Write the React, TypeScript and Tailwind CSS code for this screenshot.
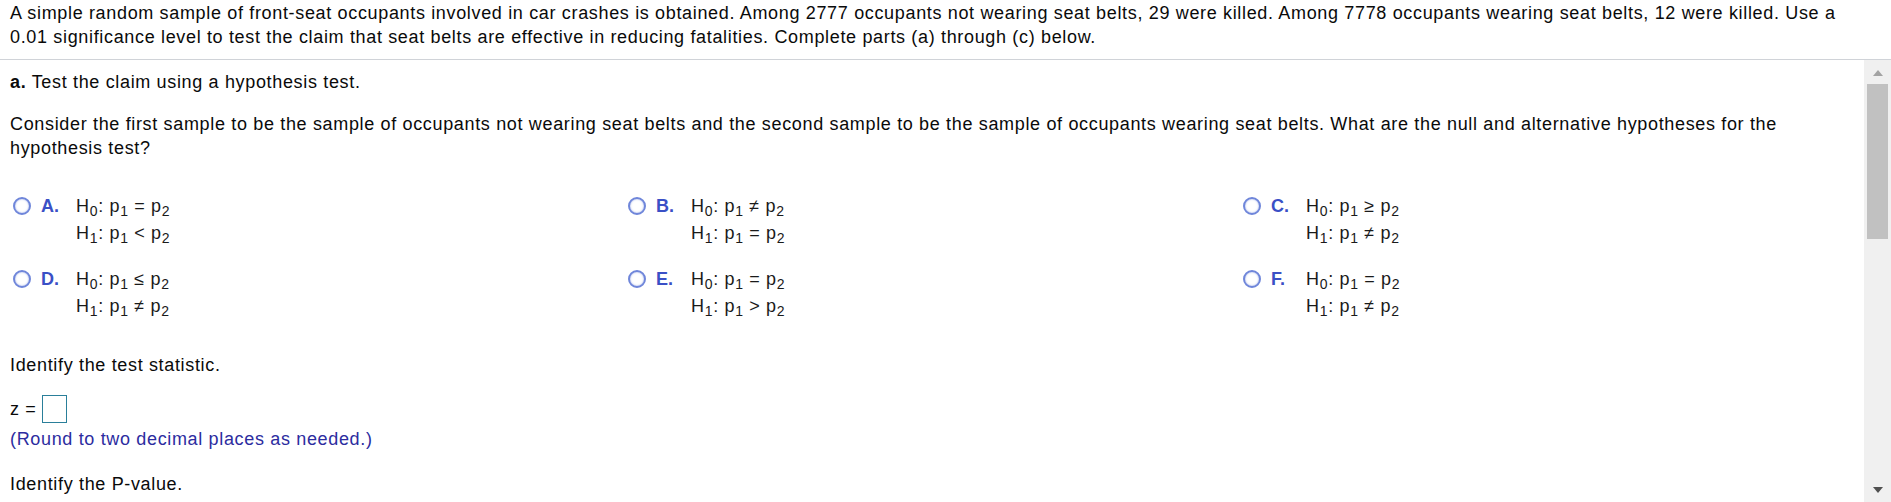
const options = [
  { key: "A", h0: "=", h1: "<" },
  { key: "B", h0: "≠", h1: "=" },
  { key: "C", h0: "≥", h1: "≠" },
  { key: "D", h0: "≤", h1: "≠" },
  { key: "E", h0: "=", h1: ">" },
  { key: "F", h0: "=", h1: "≠" },
];

function Sub({ children }: { children: React.ReactNode }) {
  return <span className="relative top-[4px] text-[14px] leading-none">{children}</span>;
}

function Hyp({ n, rel }: { n: string; rel: string }) {
  return (
    <div className="h-[27px] leading-[27px] whitespace-nowrap">
      H<Sub>{n}</Sub>: p<Sub>1</Sub> {rel} p<Sub>2</Sub>
    </div>
  );
}

function Option({ k, h0, h1 }: { k: string; h0: string; h1: string }) {
  return (
    <div className="flex items-start pl-[3px]">
      <div className="mt-[4px] h-[18px] w-[18px] shrink-0 rounded-full border-2 border-[#6f86da] bg-white shadow-[inset_0_0_2px_rgba(111,134,218,0.7)]" />
      <div className="ml-[10px] w-[35px] shrink-0 font-bold leading-[27px] tracking-normal text-[#3a50c6]">{k}.</div>
      <div className="text-[#1a1a1a]">
        <Hyp n="0" rel={h0} />
        <Hyp n="1" rel={h1} />
      </div>
    </div>
  );
}

export default function App() {
  return (
    <main className="h-[502px] w-full overflow-hidden bg-white font-['Liberation_Sans',Arial,sans-serif] text-[18px] tracking-[0.66px] text-[#0a0a0a]">
      {/* question stem */}
      <div className="border-b border-[#d0d3d8] px-[10px] pt-[1px] pb-[10px] leading-[24px]">
        A simple random sample of front-seat occupants involved in car crashes is obtained. Among 2777 occupants not
        wearing seat belts, 29 were killed. Among 7778 occupants wearing seat belts, 12 were killed. Use a
        <br />
        0.01 significance level to test the claim that seat belts are effective in reducing fatalities. Complete parts
        (a) through (c) below.
      </div>

      <div className="flex h-[442px]">
        {/* scrolling content */}
        <div className="min-w-0 flex-1 pl-[10px] pr-[9px] pt-[10px] leading-[24px]">
          <p>
            <span className="font-bold">a.</span> Test the claim using a hypothesis test.
          </p>
          <p className="mt-[18px]">
            Consider the first sample to be the sample of occupants not wearing seat belts and the second sample to be
            the sample of occupants wearing seat belts. What are the null and alternative hypotheses for the
            <br />
            hypothesis test?
          </p>

          <div className="mt-[33px] grid grid-cols-3 gap-y-[19px]">
            {options.map((o) => (
              <Option key={o.key} k={o.key} h0={o.h0} h1={o.h1} />
            ))}
          </div>

          <p className="mt-[33px]">Identify the test statistic.</p>
          <div className="mt-[18px] flex h-[28px] items-center leading-[28px]">
            <span>z =&nbsp;</span>
            <span className="h-[28px] w-[25px] border border-[#2a7f9a] bg-white" />
          </div>
          <p className="mt-[4px] text-[#2c2ca0]">(Round to two decimal places as needed.)</p>
          <p className="mt-[21px]">Identify the P-value.</p>
        </div>

        {/* scrollbar */}
        <div className="flex w-[27px] shrink-0 flex-col items-center bg-[#f0f0f0]">
          <div className="mt-[10px] h-0 w-0 border-x-[5px] border-b-[6px] border-x-transparent border-b-[#a3a3a3]" />
          <div className="mt-[8px] h-[155px] w-[21px] bg-[#c1c1c1]" />
          <div className="flex-1" />
          <div className="mb-[9px] h-0 w-0 border-x-[5px] border-t-[6px] border-x-transparent border-t-[#505050]" />
        </div>
      </div>
    </main>
  );
}
